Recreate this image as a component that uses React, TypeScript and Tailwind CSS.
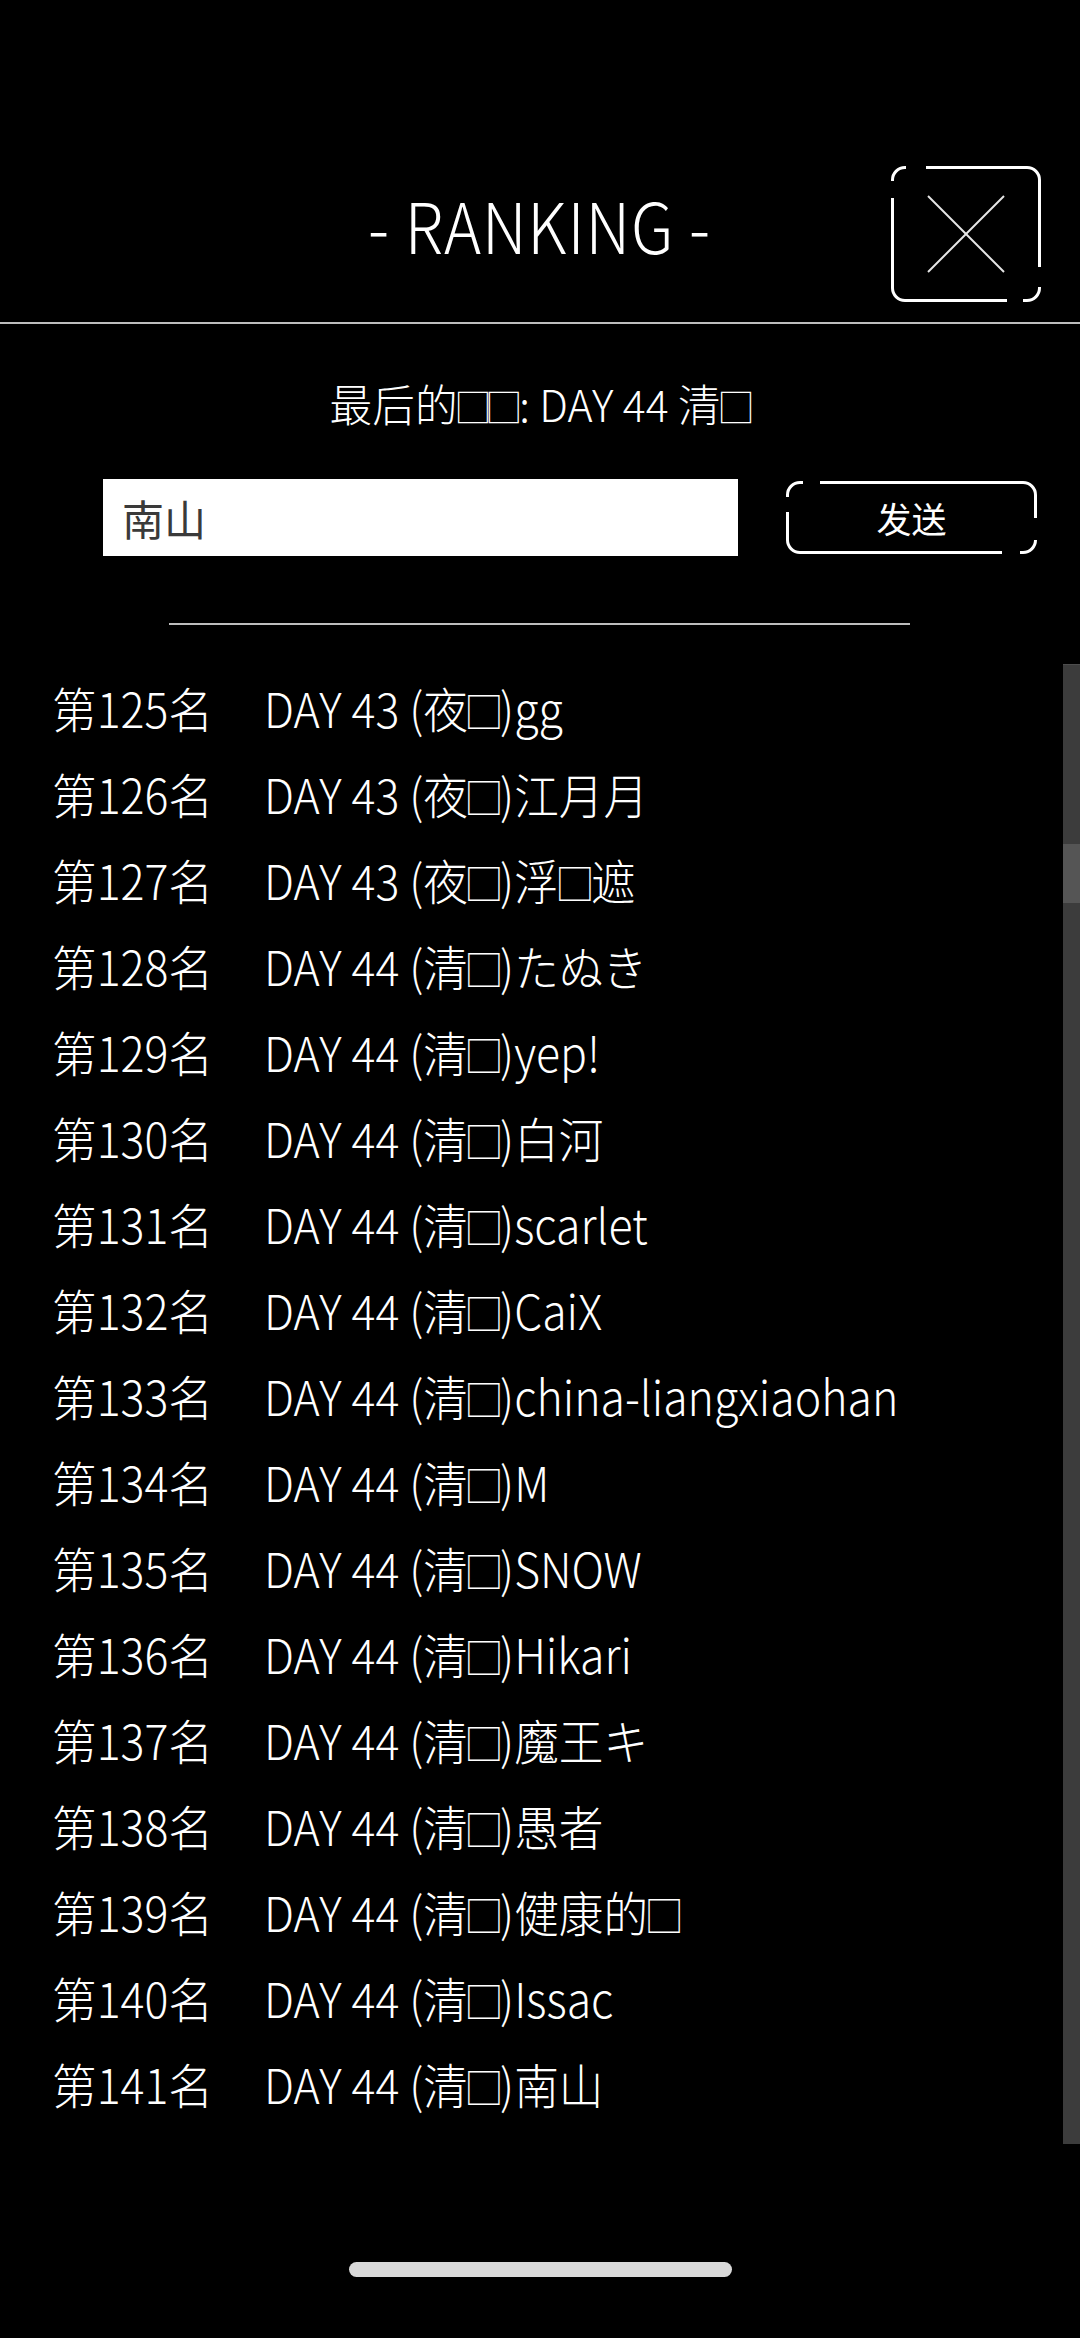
import React from "react";

const rows: Array<{ rank: number; day: number; time: string; name: string }> = [
  { rank: 125, day: 43, time: "夜", name: "gg" },
  { rank: 126, day: 43, time: "夜", name: "江月月" },
  { rank: 127, day: 43, time: "夜", name: "浮□遮" },
  { rank: 128, day: 44, time: "清", name: "たぬき" },
  { rank: 129, day: 44, time: "清", name: "yep!" },
  { rank: 130, day: 44, time: "清", name: "白河" },
  { rank: 131, day: 44, time: "清", name: "scarlet" },
  { rank: 132, day: 44, time: "清", name: "CaiX" },
  { rank: 133, day: 44, time: "清", name: "china-liangxiaohan" },
  { rank: 134, day: 44, time: "清", name: "M" },
  { rank: 135, day: 44, time: "清", name: "SNOW" },
  { rank: 136, day: 44, time: "清", name: "Hikari" },
  { rank: 137, day: 44, time: "清", name: "魔王キ" },
  { rank: 138, day: 44, time: "清", name: "愚者" },
  { rank: 139, day: 44, time: "清", name: "健康的□" },
  { rank: 140, day: 44, time: "清", name: "Issac" },
  { rank: 141, day: 44, time: "清", name: "南山" },
];

const font = "font-['Noto_Sans_CJK_SC','Noto_Sans','DejaVu_Sans',sans-serif]";

// missing-glyph boxes, narrower than a full CJK cell
function Tofu({ text }: { text: string }) {
  const parts = text.split(/(□+)/);
  return (
    <>
      {parts.map((p, i) =>
        p.startsWith("□") ? (
          <span key={i} className="ml-[-0.09em] mr-[0.09em] text-[0.88em] tracking-[-0.18em]">
            {p}
          </span>
        ) : (
          <React.Fragment key={i}>{p}</React.Fragment>
        )
      )}
    </>
  );
}

function CloseButton() {
  return (
    <button className="relative flex h-[136px] w-[150px] items-center justify-center rounded-[14px] border-[3px] border-white">
      {/* broken frame */}
      <span className="absolute left-[12px] top-[-3px] h-[4px] w-[20px] bg-black" />
      <span className="absolute left-[-3px] top-[12px] h-[17px] w-[4px] bg-black" />
      <span className="absolute right-[-3px] top-[98px] h-[20px] w-[4px] bg-black" />
      <span className="absolute bottom-[-3px] left-[113px] h-[4px] w-[16px] bg-black" />
      <svg width="78" height="78" viewBox="0 0 78 78">
        <line x1="1" y1="1" x2="77" y2="77" stroke="#e6e6e6" strokeWidth="2" />
        <line x1="77" y1="1" x2="1" y2="77" stroke="#e6e6e6" strokeWidth="2" />
      </svg>
    </button>
  );
}

function SendButton() {
  return (
    <button className="relative flex h-[73px] w-[251px] items-center justify-center rounded-[14px] border-[3px] border-white">
      <span className="absolute left-[14px] top-[-3px] h-[4px] w-[17px] bg-black" />
      <span className="absolute left-[-3px] top-[13px] h-[15px] w-[4px] bg-black" />
      <span className="absolute right-[-3px] top-[34px] h-[22px] w-[4px] bg-black" />
      <span className="absolute bottom-[-3px] left-[213px] h-[4px] w-[18px] bg-black" />
      <span className="text-[35px] leading-none text-white">发送</span>
    </button>
  );
}

export default function App() {
  return (
    <div className={`flex min-h-[2338px] w-[1080px] flex-col bg-black text-white ${font}`}>
      {/* header */}
      <div className="grid h-[324px] grid-cols-[1fr_auto_1fr] items-start border-b-2 border-[#bdbdbd] pt-[166px]">
        <div />
        <h1 className="mt-[18px] scale-x-[0.9] text-[70px] font-light leading-[80px] tracking-[1px]">- RANKING -</h1>
        <div className="flex justify-end pr-[39px]">
          <CloseButton />
        </div>
      </div>

      <div className="mt-[55px] flex h-[48px] items-center justify-center whitespace-nowrap text-[44px] font-light leading-none">
        <span className="scale-x-[0.97]">
          <Tofu text="最后的□□: DAY 44 清□" />
        </span>
      </div>

      <div className="mt-[52px] flex items-center pl-[103px]">
        <div className="flex h-[77px] w-[635px] items-center bg-white pl-[19px] text-[42px] leading-none text-[#3a3a3a]">
          南山
        </div>
        <div className="ml-[48px]">
          <SendButton />
        </div>
      </div>

      <div className="ml-[169px] mt-[67px] h-[2px] w-[741px] bg-[#bdbdbd]" />

      {/* ranking list */}
      <div className="mt-[39px] flex h-[1480px]">
        <div className="flex flex-1 flex-col pl-[52px]">
          {rows.map((r) => (
            <div key={r.rank} className="flex h-[86px] items-center">
              <div className="flex origin-left scale-x-[0.93] items-baseline whitespace-pre text-[48px] font-light leading-none">
                <span>{`第${r.rank}名`}</span>
                <span className="ml-[55px]">
                  <Tofu text={`DAY ${r.day} (${r.time}□)${r.name}`} />
                </span>
              </div>
            </div>
          ))}
        </div>
        <div className="flex w-[17px] flex-col border-t border-[#4d4d4d] bg-[#3c3c3c]">
          <div className="mt-[179px] h-[59px] bg-[#555555]" />
        </div>
      </div>

      <div className="mx-auto mt-[118px] h-[15px] w-[383px] rounded-full bg-[#d9d9d9]" />
    </div>
  );
}
